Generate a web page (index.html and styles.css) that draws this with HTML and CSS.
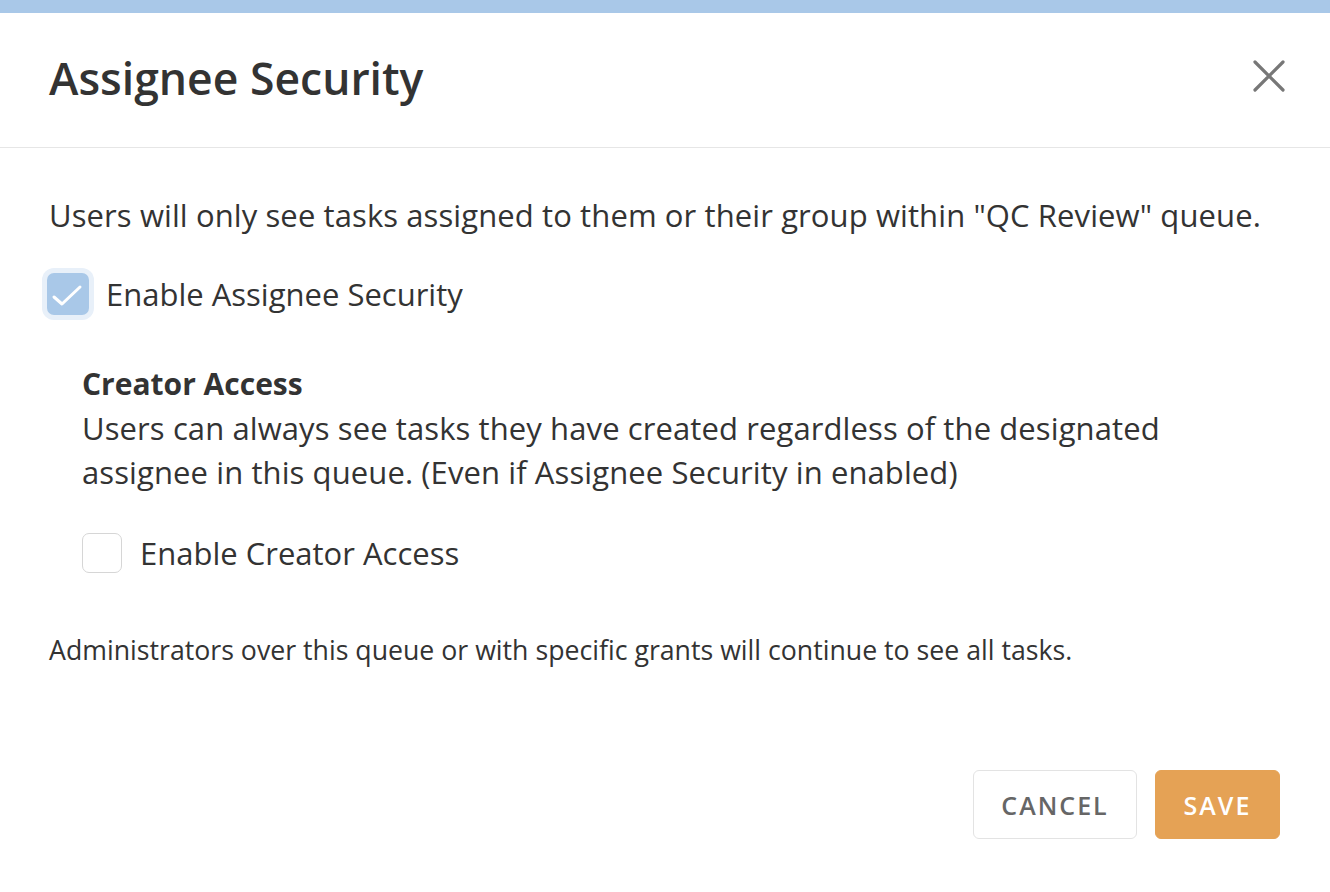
FILE: index.html
```html
<!DOCTYPE HTML>
<html>
<head>
    <meta charset='utf-8'>
    <link rel="stylesheet" href="styles.css">
</head>
<body>
    <div class="topBar"></div>
    <div class="modal">

        <!-- header -->
        <div class="modalHeader">
            <h1 class="modalTitle">Assignee Security</h1>
            <div class="closeBtn">
                <svg width="34" height="34" viewBox="0 0 34 34">
                    <path d="M3 3 L31 31 M31 3 L3 31" stroke="#777" stroke-width="3.2" stroke-linecap="round" fill="none"/>
                </svg>
            </div>
        </div>

        <!-- body -->
        <div class="modalBody">
            <p class="intro">Users will only see tasks assigned to them or their group within "QC Review" queue.</p>

            <label class="checkRow">
                <span class="checkBox checked">
                    <svg width="42" height="42" viewBox="0 0 42 42">
                        <path d="M7 24 L15 31 L33 14" stroke="#fff" stroke-width="3" stroke-linecap="round" stroke-linejoin="round" fill="none"/>
                    </svg>
                </span>
                Enable Assignee Security
            </label>

            <div class="subSection">
                <div class="subTitle">Creator Access</div>
                <div class="subText">Users can always see tasks they have created regardless of the designated assignee in this queue. (Even if Assignee Security in enabled)</div>

                <label class="checkRow second">
                    <span class="checkBox"></span>
                    Enable Creator Access
                </label>
            </div>

            <p class="note">Administrators over this queue or with specific grants will continue to see all tasks.</p>
        </div>

        <!-- footer -->
        <div class="modalFooter">
            <button class="btn btnCancel">CANCEL</button>
            <button class="btn btnSave">SAVE</button>
        </div>
    </div>
</body>
</html>
```

FILE: styles.css
```css
body {
    margin: 0;
    padding: 0;
    background-color: #fff;
    font-family: "Open Sans", "Noto Sans", sans-serif;
    color: #333;
}

.topBar {
    height: 13px;
    background-color: #a9c8e8;
}

.modalHeader {
    display: flex;
    align-items: center;
    justify-content: space-between;
    height: 134px;
    padding: 0 44px 0 49px;
    border-bottom: 1px solid #e6e6e6;
}

.modalTitle {
    margin: 0;
    font-size: 44.5px;
    font-weight: 600;
    color: #333;
    line-height: 1;
    padding-bottom: 3px;
}

.closeBtn {
    display: flex;
    margin-top: -8px;
}

.modalBody {
    padding: 45px 48px 0 49px;
}

.intro {
    margin: 0;
    font-size: 31px;
    line-height: 44px;
    letter-spacing: 0.1px;
}

.checkRow {
    display: flex;
    align-items: center;
    font-size: 31px;
    line-height: 44px;
    margin-top: 35px;
    margin-left: -2px;
}

.checkBox {
    box-sizing: border-box;
    width: 40px;
    height: 40px;
    border: 1px solid #d6d6d6;
    border-radius: 7px;
    margin-right: 18px;
    display: flex;
    align-items: center;
    justify-content: center;
    background-color: #fff;
}

.checkBox.checked {
    width: 42px;
    height: 42px;
    border: none;
    background-color: #a9c8e8;
    box-shadow: 0 0 0 5px #e8f0f9;
    margin: 1px 17px 1px 0;
}

.subSection {
    padding-left: 33px;
    margin-top: 46px;
}

.subTitle {
    font-size: 30px;
    font-weight: 700;
    line-height: 44px;
}

.subText {
    font-size: 31px;
    line-height: 44px;
    letter-spacing: 0.1px;
}

.checkRow.second {
    margin-top: 37px;
    margin-left: 0;
}

.note {
    margin: 57px 0 0 0;
    font-size: 26.7px;
    line-height: 36px;
}

.modalFooter {
    display: flex;
    justify-content: flex-end;
    gap: 18px;
    padding: 102px 50px 0 0;
}

.btn {
    box-sizing: border-box;
    height: 69px;
    border-radius: 6px;
    font-family: "Open Sans", "Noto Sans", sans-serif;
    font-size: 25px;
    font-weight: 600;
    letter-spacing: 2px;
    padding: 0;
    cursor: pointer;
}

.btnCancel {
    width: 164px;
    background-color: #fff;
    border: 1px solid #e3e3e3;
    color: #666;
}

.btnSave {
    width: 125px;
    background-color: #e5a255;
    border: 1px solid #e5a255;
    color: #fff;
}
```
